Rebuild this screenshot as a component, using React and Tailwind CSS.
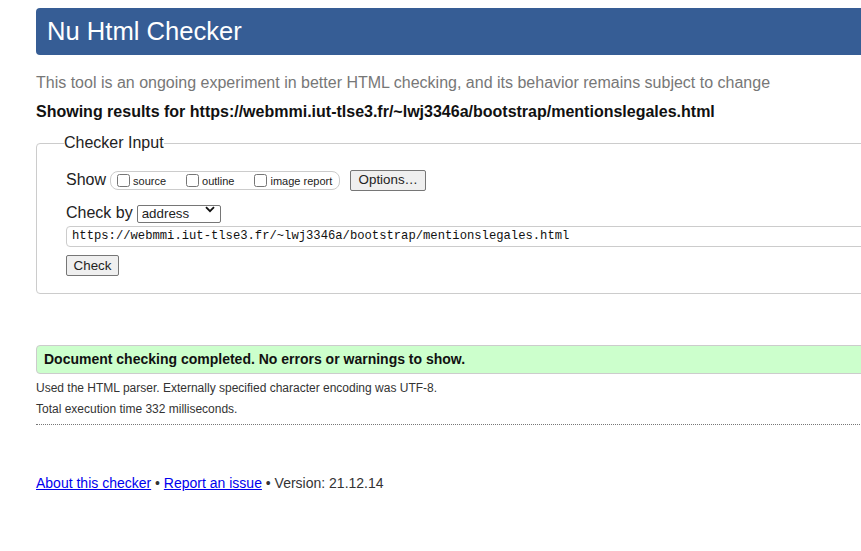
import React from "react";

const URL_TEXT = "https://webmmi.iut-tlse3.fr/~lwj3346a/bootstrap/mentionslegales.html";

const Box = ({ label, last }) => (
  <label className={`flex items-center ${last ? "" : "mr-[20px]"}`}>
    <input type="checkbox" className="w-[13px] h-[13px] mr-[3px]" />
    <span className="text-[11px] leading-[13px] pt-[3px]">{label}</span>
  </label>
);

export default function App() {
  return (
    <div className="w-[861px] h-[551px] overflow-hidden bg-white text-[#222] font-['Liberation_Sans',Arial,sans-serif]">
      <div className="w-[1200px] pl-[36px] pt-[8px]">
        <header className="h-[47px] bg-[#365d95] rounded-[4px] flex items-center pl-[11px]">
          <h1 className="text-white text-[25.6px] leading-none pt-[1px]">Nu Html Checker</h1>
        </header>

        <p className="mt-[19px] text-[16px] leading-[18px] text-[#777]">
          This tool is an ongoing experiment in better HTML checking, and its behavior remains subject to change
        </p>
        <p className="mt-[11px] text-[16px] leading-[18px] font-bold text-[#111]">
          Showing results for {URL_TEXT}
        </p>

        <fieldset className="mt-[13px] border border-[#ccc] rounded-[4px] pl-[27px] pb-[17px]">
          <legend className="text-[16px] leading-[18px] text-[#222]">Checker Input</legend>
          <div className="pl-[2px] pt-[17px]">
            <div className="flex items-center h-[22px]">
              <span className="text-[16px] leading-[18px] mr-[4px]">Show</span>
              <div className="flex items-center h-[19px] border border-[#ccc] rounded-[8px] pl-[6px] pr-[7px]">
                <Box label="source" />
                <Box label="outline" />
                <Box label="image report" last />
              </div>
              <button className="ml-[10px] h-[21px] w-[76px] text-[13.33px] bg-[#efefef] border border-[#767676] rounded-[2px] flex items-center justify-center">
                Options…
              </button>
            </div>

            <div className="flex items-center mt-[12px] h-[19px]">
              <span className="text-[16px] leading-[18px] mr-[4px]">Check by</span>
              <div className="relative">
                <select className="appearance-none w-[84px] h-[18px] border border-[#767676] rounded-[2px] pl-[4px] text-[13.33px] leading-[16px] bg-white">
                  <option>address</option>
                </select>
                <svg className="absolute right-[6px] top-[5px] pointer-events-none" width="10" height="7" viewBox="0 0 10 7">
                  <path d="M1 1.2 L5 5.2 L9 1.2" fill="none" stroke="#111" strokeWidth="1.8" />
                </svg>
              </div>
            </div>

            <div className="mt-[4px] h-[21px] border border-[#ccc] rounded-[4px] flex items-center pl-[5px]">
              <span className="font-['Liberation_Mono',monospace] text-[12.2px] leading-none text-[#111]">{URL_TEXT}</span>
            </div>

            <button className="mt-[8px] h-[21px] w-[53px] text-[13.33px] bg-[#efefef] border border-[#767676] rounded-[2px] flex items-center justify-center">
              Check
            </button>
          </div>
        </fieldset>

        <div className="mt-[51px] h-[29px] bg-[#ccffcc] border border-[#ccc] rounded-[4px] flex items-center pl-[7px]">
          <p className="text-[14px] font-bold text-[#111]">Document checking completed. No errors or warnings to show.</p>
        </div>

        <p className="mt-[7px] text-[12px] leading-[14px] text-[#333]">
          Used the HTML parser. Externally specified character encoding was UTF-8.
        </p>
        <p className="mt-[7px] text-[12px] leading-[14px] text-[#333]">Total execution time 332 milliseconds.</p>
        <div className="mt-[8px] border-t border-dotted border-[#777]" />

        <p className="mt-[50px] text-[14px] leading-[16px] text-[#333]">
          <a href="#" className="text-[#0000ee] underline">About this checker</a>
          {" • "}
          <a href="#" className="text-[#0000ee] underline">Report an issue</a>
          {" • Version: 21.12.14"}
        </p>
      </div>
    </div>
  );
}
